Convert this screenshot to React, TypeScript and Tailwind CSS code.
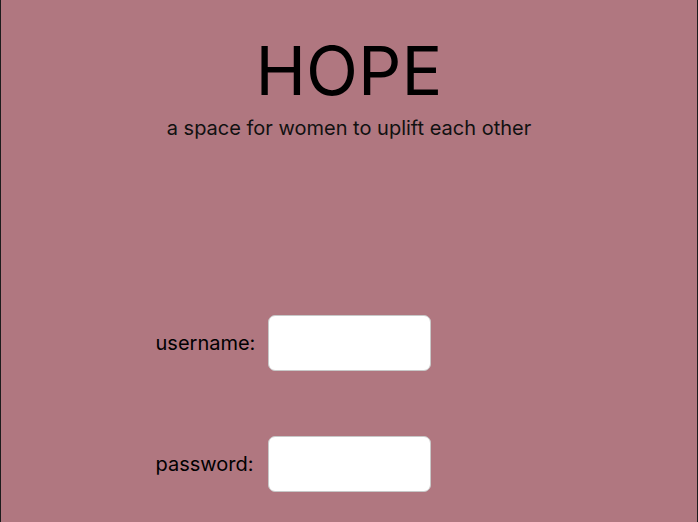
export default function App() {
  return (
    <div
      className="flex h-[522px] w-[698px] flex-col items-center overflow-hidden border-x border-[#1c1c1c] bg-[#b07780] text-black"
      style={{ fontFamily: 'Inter, "Liberation Sans", sans-serif' }}
    >
      <h1 className="mt-[30px] text-[68px] leading-[80px] font-normal">HOPE</h1>
      <p className="mt-[6px] text-[20px] leading-[24px] text-[#111]">a space for women to uplift each other</p>

      <div className="mt-[175px] flex flex-col gap-[65px] pr-[112px]">
        <div className="flex items-center gap-[14px]">
          <label className="w-[98px] text-[20px]">username:</label>
          <input className="h-[56px] w-[163px] rounded-[7px] border border-[#c8c8c8] bg-white" />
        </div>
        <div className="flex items-center gap-[14px]">
          <label className="w-[98px] text-[20px]">password:</label>
          <input type="password" className="h-[56px] w-[163px] rounded-[7px] border border-[#c8c8c8] bg-white" />
        </div>
      </div>
    </div>
  )
}
